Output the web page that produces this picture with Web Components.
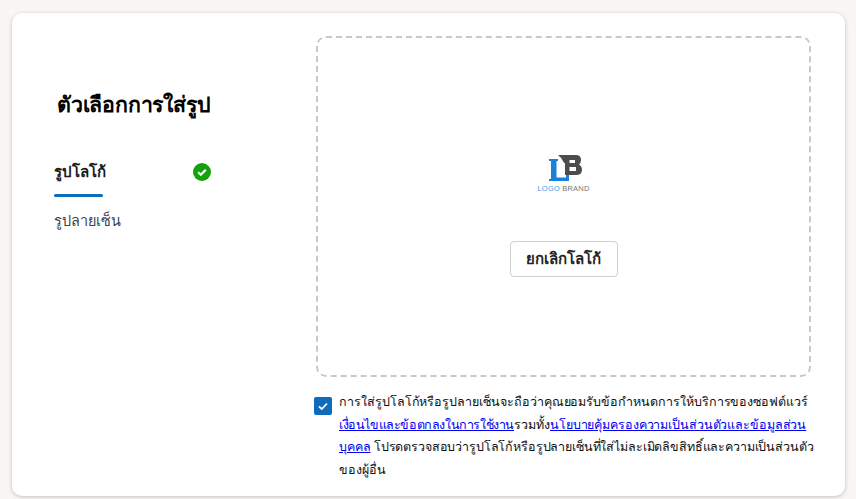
<!doctype html>
<html lang="th"><head><meta charset="utf-8"><style>
html,body{margin:0;height:499px;overflow:hidden;background:#f8f7f5}
body{font-family:"Noto Sans","Open Sans",Roboto,sans-serif;color:#111}
</style></head><body>
<app-page>
<side-tabs slot="side"></side-tabs>
<drop-zone slot="main"></drop-zone>
<terms-check slot="main"></terms-check>
</app-page>
<template id="page-t"><style>
:host{display:block;padding:13px 11px 3px 12px;box-sizing:border-box;height:499px}
.card{box-sizing:border-box;height:483px;background:#fff;border-radius:10px;box-shadow:0 1px 4px rgba(0,0,0,.22);display:grid;grid-template-columns:260px 1fr;padding:23px 34px 0 42px;column-gap:0}
.main{display:flex;flex-direction:column;min-width:0}
</style><div class="card"><div><slot name="side"></slot></div><div class="main"><slot name="main"></slot></div></div></template>
<template id="side-t"><style>
:host{display:block;padding-top:52px}
h1{font-size:21.300px;line-height:32px;font-weight:700;margin:0 0 0 3px;color:#000;letter-spacing:-.2px}
.tab{display:flex;justify-content:space-between;align-items:center;width:157px;margin-top:36px;height:32px}
.tab b{font-size:15px;font-weight:600;color:#1b1b1b}
.bar{width:49px;height:3px;background:#0f6cbd;border-radius:2px;margin-top:6px}
.tab2{font-size:14.400px;color:#424242;margin-top:12px;line-height:24px}
svg{display:block}
</style><h1>ตัวเลือกการใส่รูป</h1>
<div class="tab"><b>รูปโลโก้</b><svg width="18" height="18" viewBox="0 0 18 18"><circle cx="9" cy="9" r="9" fill="#13a10e"/><path d="M5.200 9.300 7.800 11.800 12.800 6.800" fill="none" stroke="#fff" stroke-width="2.200"/></svg></div>
<div class="bar"></div><div class="tab2">รูปลายเซ็น</div></template>
<template id="drop-t"><style>
:host{display:flex;flex-direction:column;align-items:center;box-sizing:border-box;width:495px;height:341px;margin-left:2px;border:2px dashed #c8c8c8;border-radius:10px;padding-top:117px}
svg{display:block}
button{margin-top:48px;width:108px;height:36px;border:1px solid #d1d1d1;border-radius:4px;background:#fff;font:600 15px "Noto Sans",sans-serif;color:#242424;padding:0}
.logo{display:flex;flex-direction:column;align-items:center}
.t{font:7.500px/9px "Liberation Sans",sans-serif;letter-spacing:.2px;color:#777;margin-top:3px}.t i{font-style:normal;color:#4a9be3}
</style><div class="logo"><svg width="36" height="26" viewBox="0 0 36 26" style="margin-left:4px"><path d="M1 4H10V6H8.500V22.500H18V20H21V26H1V24H3V6H1Z" fill="#1a80dc"/><path fill-rule="evenodd" d="M10 0H28Q33 0 33 5Q33 8 31 9.500Q34 11 34 15Q34 20 28 20H17V8.500L15.500 7Q14 3 10 0ZM21.500 5V8H27V5ZM21.500 12V16H28V12Z" fill="#4c4c4c"/></svg><div class="t"><i>LOGO</i> BRAND</div></div><button>ยกเลิกโลโก้</button></template>
<template id="terms-t"><style>
:host{display:flex;gap:7px;margin-top:14px;font-size:12.500px;line-height:22.700px;color:#111}
.box{flex:none;width:18px;height:18px;background:#0f6cbd;border-radius:2px;margin-top:6px;display:block}
a{color:#0000ee;text-decoration:underline}
p{margin:0;width:484px;white-space:nowrap}
.l1{letter-spacing:-.05px}.l2{letter-spacing:-.4px}.l3{letter-spacing:-.11px}.l4{letter-spacing:-.14px}
</style><svg class="box" viewBox="0 0 18 18"><path d="M5 9.500 7.800 12 13 6.500" fill="none" stroke="#fff" stroke-width="1.700"/></svg><p><span class="l1">การใส่รูปโลโก้หรือรูปลายเซ็นจะถือว่าคุณยอมรับข้อกำหนดการให้บริการของซอฟต์แวร์</span><br><a class="l2" href="#">เงื่อนไขและข้อตกลงในการใช้งาน</a>รวมทั้ง<a class="l3" href="#">นโยบายคุ้มครองความเป็นส่วนตัวและข้อมูลส่วน<br>บุคคล</a> <span class="l4">โปรดตรวจสอบว่ารูปโลโก้หรือรูปลายเซ็นที่ใส่ไม่ละเมิดลิขสิทธิ์และความเป็นส่วนตัว</span><br>ของผู้อื่น</p></template>
<script>
for(const [n,t] of [['app-page','page-t'],['side-tabs','side-t'],['drop-zone','drop-t'],['terms-check','terms-t']]){
customElements.define(n,class extends HTMLElement{constructor(){super();this.attachShadow({mode:'open'}).append(document.getElementById(t).content.cloneNode(true))}})}
</script></body></html>
